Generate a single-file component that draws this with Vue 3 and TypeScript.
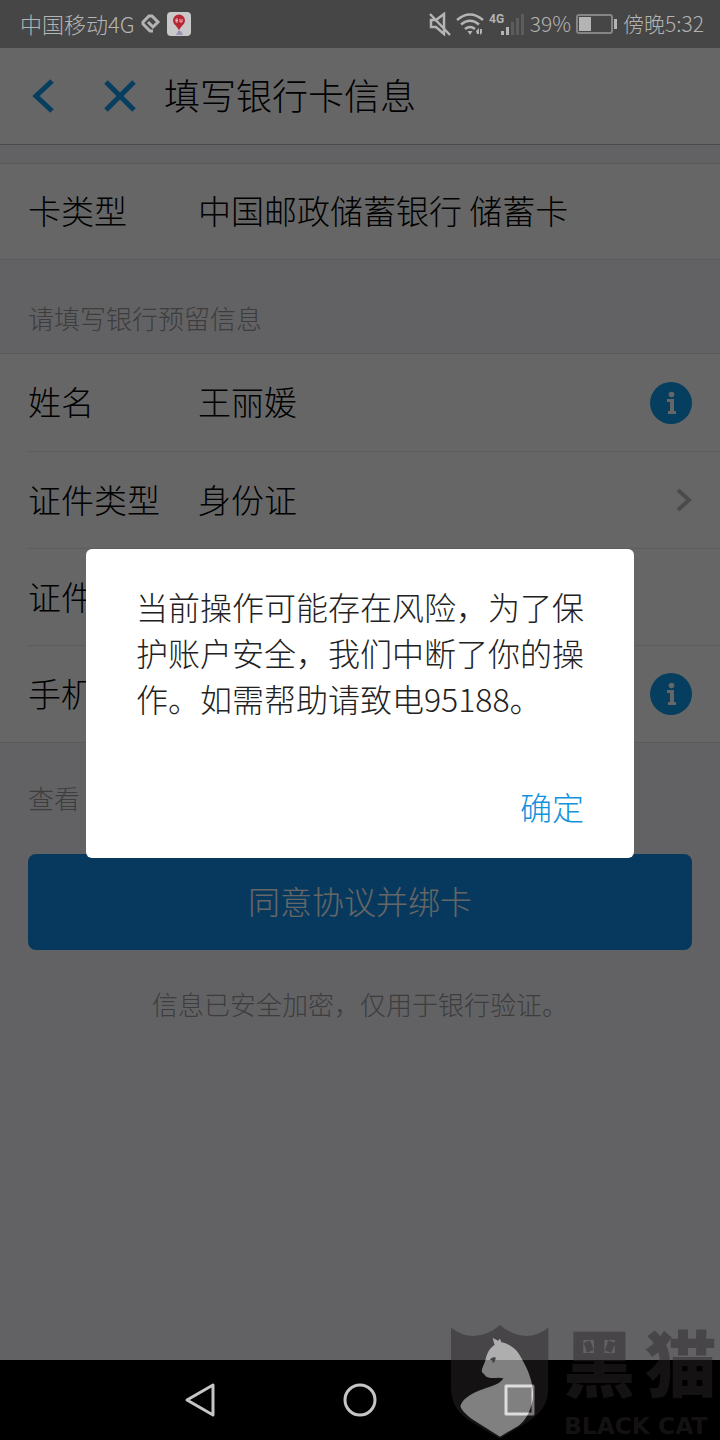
<script setup lang="ts">
import { ref } from 'vue'

const holder = ref('王丽媛')
const idNumber = ref('')
const phone = ref('')
const message = '当前操作可能存在风险，为了保护账户安全，我们中断了你的操作。如需帮助请致电95188。'
</script>

<template>
  <div class="screen">
    <div class="status">
      <div class="status-side">
        <span class="carrier">中国移动4G</span>
        <svg class="loop" width="20" height="20" viewBox="0 0 20 20">
          <path d="M12 17H9L2 10V8L8 2H11L17 8L12 13L7 8" />
        </svg>
        <svg class="app-badge" width="24" height="24" viewBox="0 0 24 24">
          <rect width="24" height="24" rx="4" fill="#c9c9cb" />
          <path d="M9 23h7l-2-4h-3z" fill="#9694b4" />
          <path d="M12 19 C11 14 6 13 6 8.500 A6 6 0 0 1 18 8.500 C18 13 13 14 12 19Z" fill="#b92633" />
          <path d="M11 7H9v3h2M9 8.500h2M13 7v3h2V7" fill="none" stroke="#e5b9bd" />
        </svg>
      </div>
      <div class="status-side right">
        <svg class="line-icon" width="22" height="24" viewBox="0 0 22 24">
          <path d="M2 8h5L15 2v20L7 15H2z M1 2l20 21" />
        </svg>
        <svg class="line-icon wifi" width="28" height="24" viewBox="0 0 28 24">
          <path d="M1 8Q14 -3 27 8M5 12.500Q14 5 23 12.500M9 17Q14 13 19 17" />
          <path class="fill" d="M11.500 19h5l-2.500 4zM20 19l3-3v6h-2zM24 17h2v4l-2 2z" />
        </svg>
        <svg class="signal" width="36" height="24" viewBox="0 0 36 24">
          <text x="0" y="11">4G</text>
          <path d="M12 19h3v4h-3zM17 15h3v8h-3z" />
          <path class="weak" d="M22 10h3v13h-3zM27 6h3v17h-3zM32 2h3v21h-3z" />
        </svg>
        <span>39%</span>
        <svg class="battery" width="42" height="22" viewBox="0 0 42 22">
          <rect x="1" y="2" width="35" height="18" rx="2" />
          <path d="M3 4h12v14H3zM38 6h3v10h-3z" />
        </svg>
        <span>傍晚5:32</span>
      </div>
    </div>

    <main class="main">
      <header class="bar">
        <button class="icon-btn back" aria-label="返回">
          <svg width="24" height="34" viewBox="0 0 24 34"><path d="M20 2L4 17L20 32" /></svg>
        </button>
        <button class="icon-btn" aria-label="关闭">
          <svg width="32" height="34" viewBox="0 0 32 34"><path d="M2 3L30 31M30 3L2 31" /></svg>
        </button>
        <h1>填写银行卡信息</h1>
      </header>

      <form class="form" @submit.prevent>
        <div class="group">
          <div class="row">
            <span class="name">卡类型</span>
            <span class="value">中国邮政储蓄银行 储蓄卡</span>
          </div>
        </div>

        <p class="hint">请填写银行预留信息</p>

        <div class="group">
          <div class="row">
            <label class="name" for="holder">姓名</label>
            <input id="holder" v-model="holder" class="value" type="text">
            <button class="info" type="button" aria-label="姓名说明">
              <svg width="42" height="42" viewBox="0 0 42 42">
                <circle cx="21" cy="21" r="21" />
                <circle class="mark" cx="21.500" cy="12.500" r="2.800" />
                <path class="mark" d="M17 17h7v12h2v3h-8v-3h2v-9h-3z" />
              </svg>
            </button>
          </div>
          <button class="row" type="button">
            <span class="name">证件类型</span>
            <span class="value">身份证</span>
            <svg class="chevron" width="16" height="24" viewBox="0 0 16 24"><path d="M2 2L13 12L2 22" /></svg>
          </button>
          <div class="row">
            <label class="name" for="id-number">证件</label>
            <input id="id-number" v-model="idNumber" class="value" type="text">
          </div>
          <div class="row">
            <label class="name" for="phone">手机</label>
            <input id="phone" v-model="phone" class="value" type="tel">
            <button class="info" type="button" aria-label="手机说明">
              <svg width="42" height="42" viewBox="0 0 42 42">
                <circle cx="21" cy="21" r="21" />
                <circle class="mark" cx="21.500" cy="12.500" r="2.800" />
                <path class="mark" d="M17 17h7v12h2v3h-8v-3h2v-9h-3z" />
              </svg>
            </button>
          </div>
        </div>

        <p class="agreement">查看</p>
        <button class="submit" type="submit">同意协议并绑卡</button>
        <p class="secure">信息已安全加密，仅用于银行验证。</p>
      </form>

      <div class="scrim">
        <div class="dialog" role="alertdialog" aria-modal="true" aria-describedby="dialog-text">
          <p id="dialog-text">{{ message }}</p>
          <button class="confirm" type="button">确定</button>
        </div>
      </div>
    </main>

    <nav class="nav">
      <button aria-label="返回键">
        <svg width="34" height="36" viewBox="0 0 34 36"><path d="M29 3V33L3 18Z" /></svg>
      </button>
      <button aria-label="主屏幕">
        <svg width="36" height="36" viewBox="0 0 36 36"><circle cx="18" cy="18" r="15" /></svg>
      </button>
      <button aria-label="最近任务">
        <svg width="34" height="36" viewBox="0 0 34 36"><path d="M4 4H31V32H4Z" /></svg>
      </button>
    </nav>

    <svg class="watermark" width="280" height="150" viewBox="0 -60 840 450" role="img" aria-label="黑猫 BLACK CAT">
      <defs>
        <path
          id="cat"
          d="M158 84L174 92L180 86L184 97C215 103 234 122 246 148C266 182 280 220 279 256C278 296 256 334 236 347L180 380L106 334C84 320 66 304 61 289C68 262 105 245 145 232C170 224 185 216 190 205C174 200 164 206 148 203C136 202 135 194 129 190C121 181 128 174 131 164C137 155 137 139 145 125C151 114 158 109 164 105Z"
        />
        <mask id="around-cat">
          <rect width="840" height="390" fill="#fff" />
          <use href="#cat" fill="#000" />
        </mask>
      </defs>
      <path
        class="ink"
        mask="url(#around-cat)"
        d="M33 53Q67 78 100 78Q145 76 180 45Q215 76 260 78Q292 78 325 53V230C325 285 300 312 260 338L180 386L98 338C58 312 33 285 33 230Z"
      />
      <use class="cat" href="#cat" />
      <path class="eye" d="M150 150Q154 140 167 142Q167 156 158 160Q160 151 150 150Z" />
      <text class="ink brand" y="242"><tspan x="370">黑</tspan><tspan x="614">猫</tspan></text>
      <text class="ink latin" x="372" y="371">BLACK CAT</text>
    </svg>
  </div>
</template>

<style>
body {
  margin: 0;
  background: #000;
}
</style>

<style scoped>
.screen {
  position: relative;
  display: flex;
  flex-direction: column;
  min-height: 100vh;
  overflow: hidden;
  color: #000;
  font-family: "Noto Sans CJK SC", sans-serif;
  font-weight: 300;
}

p,
h1 {
  margin: 0;
  font-weight: inherit;
}

button,
input {
  box-sizing: border-box;
  margin: 0;
  padding: 0;
  border: 0;
  border-radius: 0;
  background: none;
  color: inherit;
  font: inherit;
  text-align: left;
  outline: none;
}

svg {
  display: block;
  flex: none;
}

.status {
  display: flex;
  align-items: center;
  justify-content: space-between;
  height: 48px;
  padding: 0 16px 0 20px;
  background: #464646;
  color: #b4b4b4;
  font-size: 21px;
  line-height: 30px;
}

.status-side {
  display: flex;
  align-items: center;
  gap: 6px;
}

.right {
  gap: 5px;
}

.carrier {
  font-size: 22px;
}

.status span {
  padding-bottom: 2px;
}

.loop {
  fill: none;
  stroke: #b4b4b4;
  stroke-width: 3;
}

.line-icon {
  fill: none;
  stroke: #b4b4b4;
  stroke-width: 2.5;
}

.line-icon .fill {
  fill: #b4b4b4;
  stroke: none;
}

.signal {
  fill: #b4b4b4;
}

.signal text {
  font: bold 12px Roboto, sans-serif;
}

.signal .weak {
  fill: #5c5c5c;
}

.battery {
  fill: #b4b4b4;
}

.battery rect {
  fill: none;
  stroke: #858585;
  stroke-width: 2;
}

.main {
  position: relative;
  flex: 1;
  background: #f5f5f9;
}

.bar {
  box-sizing: border-box;
  display: flex;
  align-items: center;
  height: 97px;
  padding-left: 32px;
  border-bottom: 1px solid #b8b8b8;
  background: #fff;
}

.bar h1 {
  margin-left: 28px;
  padding-bottom: 4px;
  font-size: 36px;
  line-height: 48px;
}

.icon-btn svg {
  fill: none;
  stroke: #109cf0;
  stroke-width: 5;
}

.back {
  margin-right: 48px;
}

.form {
  padding-top: 18px;
}

.group {
  border-top: 1px solid #e2e2e2;
  border-bottom: 1px solid #e2e2e2;
  background: #fff;
}

.row {
  box-sizing: border-box;
  display: flex;
  align-items: center;
  width: calc(100% - 28px);
  height: 97px;
  margin-left: 28px;
  padding-right: 28px;
  font-size: 33px;
  line-height: 48px;
}

.row + .row {
  border-top: 1px solid #e8e8e8;
}

.group:first-child .row {
  height: 95px;
}

.name,
.value {
  padding-bottom: 3px;
}

.name {
  flex: none;
  width: 170px;
}

.value {
  flex: 1;
  min-width: 0;
}

.info {
  fill: #109cf0;
}

.info .mark {
  fill: #fff;
}

.chevron {
  fill: none;
  stroke: #bbb;
  stroke-width: 4;
}

.hint,
.agreement,
.secure {
  color: #999;
  font-size: 26px;
  line-height: 40px;
}

.hint {
  padding: 38px 28px 15px;
}

.agreement {
  padding: 35px 28px 36px;
}

.submit {
  display: block;
  width: calc(100% - 56px);
  height: 96px;
  margin: 0 28px;
  padding-bottom: 4px;
  border-radius: 8px;
  background: #108ee9;
  color: #fff;
  font-size: 32px;
  text-align: center;
}

.secure {
  padding-top: 34px;
  text-align: center;
}

.scrim {
  position: absolute;
  inset: 0;
  display: flex;
  align-items: center;
  justify-content: center;
  padding: 0 86px 2px;
  background: rgba(0, 0, 0, 0.6);
}

.dialog {
  display: flex;
  flex: 1;
  flex-direction: column;
  align-items: flex-end;
  gap: 62px;
  padding: 34px 50px 29px;
  border-radius: 6px;
  background: #fff;
  color: #222;
  font-size: 32px;
  line-height: 46px;
}

.dialog p {
  width: 100%;
}

.confirm {
  color: #1292dc;
}

.nav {
  display: flex;
  align-items: center;
  justify-content: space-between;
  height: 80px;
  padding: 0 184px;
  background: #000;
}

.nav svg {
  fill: none;
  stroke: #c6c6c6;
  stroke-width: 3;
  stroke-linejoin: round;
}

.watermark {
  position: absolute;
  right: 0;
  bottom: 0;
  pointer-events: none;
}

.ink {
  fill: rgba(42, 38, 40, 0.48);
}

.cat {
  fill: rgba(242, 242, 242, 0.53);
}

.eye {
  fill: #444247;
}

.brand {
  font-family: "Noto Sans CJK SC", sans-serif;
  font-size: 216px;
  font-weight: 900;
}

.latin {
  font-family: "DejaVu Sans", sans-serif;
  font-size: 70px;
  font-weight: 700;
}
</style>
